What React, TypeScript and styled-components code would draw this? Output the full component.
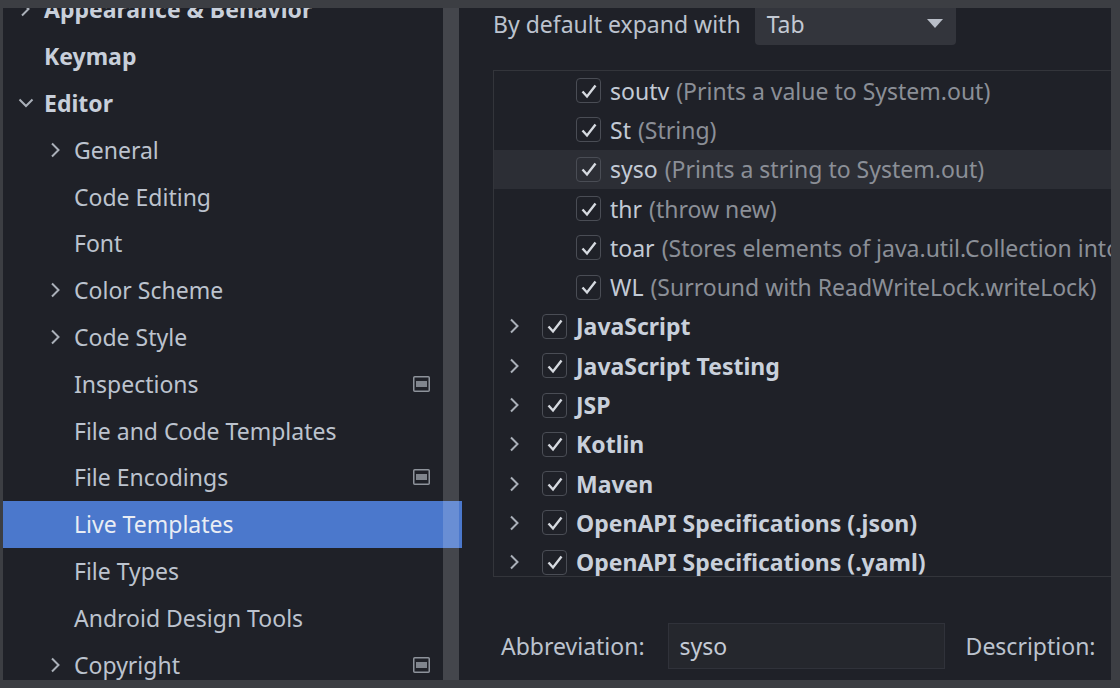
import React from 'react';
import styled, { createGlobalStyle } from 'styled-components';

const GlobalStyle = createGlobalStyle`
  html, body {
    margin: 0;
    padding: 0;
    background: #3c3e43;
    overflow: hidden;
  }
  * {
    box-sizing: border-box;
  }
`;

const Frame = styled.div`
  width: 1120px;
  height: 688px;
  padding: 8px 9px 8px 3px;
  background: #3c3e43;
  display: flex;
  font-family: 'Noto Sans', 'Open Sans', sans-serif;
  font-size: 23px;
`;

const Sidebar = styled.div`
  position: relative;
  width: 459px;
  flex-shrink: 0;
  background: #1f2128;
  overflow: hidden;
`;

const SideList = styled.div`
  margin-top: -22px;
  display: flex;
  flex-direction: column;
`;

const SideRow = styled.div<{ $level: number; $selected?: boolean }>`
  height: 46.8px;
  display: flex;
  align-items: center;
  padding-left: ${(p) => 11 + (p.$level - 1) * 30}px;
  padding-right: 32px;
  background: ${(p) => (p.$selected ? '#4b78cc' : 'transparent')};
  color: ${(p) => (p.$selected ? '#e9edf4' : p.$level === 1 ? '#c8cfda' : '#bcc3ce')};
  font-weight: ${(p) => (p.$level === 1 ? 700 : 400)};
  white-space: nowrap;
`;

const ChevronSlot = styled.span`
  width: 30px;
  height: 20px;
  padding-left: 4px;
  display: flex;
  align-items: center;
  flex-shrink: 0;
`;

const RowIcon = styled.span`
  margin-left: auto;
  display: flex;
  align-items: center;
`;

const Scrollbar = styled.div`
  position: absolute;
  top: 0;
  bottom: 0;
  right: 3px;
  width: 16px;
  background: rgba(255, 255, 255, 0.17);
`;

const Content = styled.div`
  flex: 1;
  background: #1f2128;
  padding-left: 31px;
  overflow: hidden;
  display: flex;
  flex-direction: column;
`;

const TopRow = styled.div`
  margin-top: -6px;
  height: 43px;
  display: flex;
  align-items: center;
  gap: 14px;
  color: #bcc3ce;
  white-space: nowrap;
`;

const Dropdown = styled.div`
  width: 201px;
  height: 43px;
  flex-shrink: 0;
  border-radius: 4px;
  background: #33353c;
  display: flex;
  align-items: center;
  justify-content: space-between;
  padding: 0 13px 0 12px;
  color: #c3c9d3;
`;

const ListBox = styled.div`
  margin-top: 25px;
  margin-right: -4px;
  height: 507px;
  flex-shrink: 0;
  border: 1px solid #33353b;
  overflow: hidden;
  display: flex;
  flex-direction: column;
`;

const TreeRow = styled.div<{ $child?: boolean; $selected?: boolean }>`
  height: 39.3px;
  flex-shrink: 0;
  display: flex;
  align-items: center;
  padding-left: ${(p) => (p.$child ? 82 : 13)}px;
  background: ${(p) => (p.$selected ? '#2c2e35' : 'transparent')};
  white-space: nowrap;
`;

const Expander = styled.span`
  width: 35px;
  display: flex;
  align-items: center;
`;

const CheckBox = styled.span`
  width: 25px;
  height: 25px;
  border: 1.5px solid #4a4d55;
  border-radius: 4px;
  display: flex;
  align-items: center;
  justify-content: center;
  margin-right: 9px;
  flex-shrink: 0;
`;

const Name = styled.span<{ $bold?: boolean }>`
  color: ${(p) => (p.$bold ? '#c9d0db' : '#c3cad5')};
  font-weight: ${(p) => (p.$bold ? 700 : 400)};
`;

const Hint = styled.span`
  color: #8b8f97;
  margin-left: 7px;
`;

const FieldRow = styled.div`
  margin-top: 46px;
  padding-left: 8px;
  display: flex;
  align-items: center;
  color: #bcc3ce;
  white-space: nowrap;
`;

const TextField = styled.div`
  width: 277px;
  height: 46px;
  flex-shrink: 0;
  margin: 0 21px 0 23px;
  background: #25272d;
  border: 1px solid #30323a;
  display: flex;
  align-items: center;
  padding-left: 11px;
  color: #c3cad5;
`;

const Chevron = ({ open, color = '#aab0b9' }: { open?: boolean; color?: string }) => (
  <svg width="16" height="16" viewBox="0 0 16 16">
    <path
      d={open ? 'M1.5 4.5 L8 11 L14.5 4.5' : 'M4 1.5 L10.5 8 L4 14.5'}
      fill="none"
      stroke={color}
      strokeWidth="2"
    />
  </svg>
);

const ProjectIcon = () => (
  <svg width="17" height="16" viewBox="0 0 17 16">
    <rect x="0.75" y="0.75" width="15.5" height="14.5" rx="1" fill="none" stroke="#8e939b" strokeWidth="1.5" />
    <rect x="3" y="5" width="11" height="6" fill="#80858d" />
  </svg>
);

const Check = () => (
  <svg width="18" height="18" viewBox="0 0 18 18">
    <path d="M2.5 9.5 L7 14.5 L15.5 3.5" fill="none" stroke="#d6dae0" strokeWidth="2.4" />
  </svg>
);

const sideItems = [
  { label: 'Appearance & Behavior', level: 1, chevron: 'closed' },
  { label: 'Keymap', level: 1 },
  { label: 'Editor', level: 1, chevron: 'open' },
  { label: 'General', level: 2, chevron: 'closed' },
  { label: 'Code Editing', level: 2 },
  { label: 'Font', level: 2 },
  { label: 'Color Scheme', level: 2, chevron: 'closed' },
  { label: 'Code Style', level: 2, chevron: 'closed' },
  { label: 'Inspections', level: 2, icon: true },
  { label: 'File and Code Templates', level: 2 },
  { label: 'File Encodings', level: 2, icon: true },
  { label: 'Live Templates', level: 2, selected: true },
  { label: 'File Types', level: 2 },
  { label: 'Android Design Tools', level: 2 },
  { label: 'Copyright', level: 2, chevron: 'closed', icon: true },
];

const templates = [
  { name: 'soutv', hint: '(Prints a value to System.out)' },
  { name: 'St', hint: '(String)' },
  { name: 'syso', hint: '(Prints a string to System.out)', selected: true },
  { name: 'thr', hint: '(throw new)' },
  { name: 'toar', hint: '(Stores elements of java.util.Collection into array)' },
  { name: 'WL', hint: '(Surround with ReadWriteLock.writeLock)' },
];

const groups = [
  'JavaScript',
  'JavaScript Testing',
  'JSP',
  'Kotlin',
  'Maven',
  'OpenAPI Specifications (.json)',
  'OpenAPI Specifications (.yaml)',
];

export default function App() {
  return (
    <>
      <GlobalStyle />
      <Frame>
        <Sidebar>
          <SideList>
            {sideItems.map((item) => (
              <SideRow key={item.label} $level={item.level} $selected={item.selected}>
                <ChevronSlot>
                  {item.chevron && <Chevron open={item.chevron === 'open'} />}
                </ChevronSlot>
                {item.label}
                {item.icon && (
                  <RowIcon>
                    <ProjectIcon />
                  </RowIcon>
                )}
              </SideRow>
            ))}
          </SideList>
          <Scrollbar />
        </Sidebar>
        <Content>
          <TopRow>
            By default expand with
            <Dropdown>
              Tab
              <svg width="16" height="10" viewBox="0 0 16 10">
                <path d="M0 0 H16 L8 9 Z" fill="#b9bec8" />
              </svg>
            </Dropdown>
          </TopRow>
          <ListBox>
            {templates.map((t) => (
              <TreeRow key={t.name} $child $selected={t.selected}>
                <CheckBox>
                  <Check />
                </CheckBox>
                <Name>{t.name}</Name>
                <Hint>{t.hint}</Hint>
              </TreeRow>
            ))}
            {groups.map((g) => (
              <TreeRow key={g}>
                <Expander>
                  <Chevron />
                </Expander>
                <CheckBox>
                  <Check />
                </CheckBox>
                <Name $bold>{g}</Name>
              </TreeRow>
            ))}
          </ListBox>
          <FieldRow>
            Abbreviation:
            <TextField>syso</TextField>
            Description:
          </FieldRow>
        </Content>
      </Frame>
    </>
  );
}
